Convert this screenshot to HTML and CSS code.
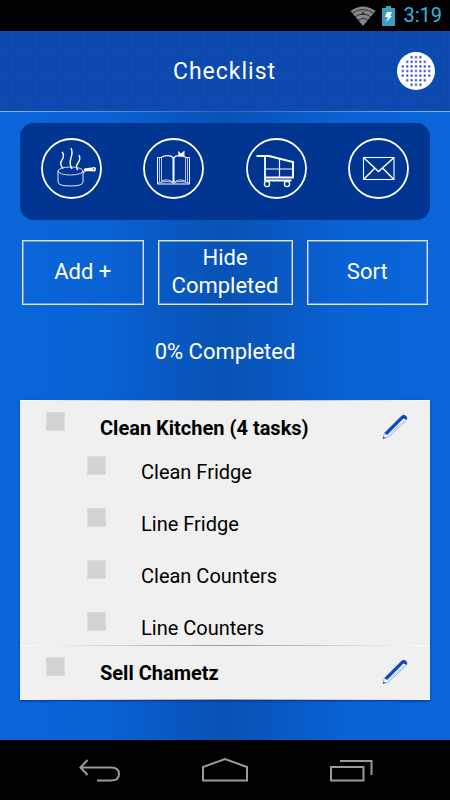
FILE: index.html
```
<!DOCTYPE html>
<html lang="en">
<head>
    <meta charset="UTF-8">
    <meta name="viewport" content="width=device-width, initial-scale=1.0">
    <title>Checklist</title>

    <link rel="stylesheet" href="styles.css">
</head>
<body>

    <!-- Device status bar -->
    <div class="status-bar">
        <svg width="26" height="20" viewBox="0 0 26 20">
            <path d="M0.5 5 Q13 -4 25.5 5 L13 20 Z" fill="#858585"/>
            <g fill="none" stroke="#222" stroke-width="0.9">
                <path d="M2 7.5 Q13 -0.5 24 7.5"/>
                <path d="M5 11 Q13 5 21 11"/>
                <path d="M8 14.5 Q13 10.5 18 14.5"/>
            </g>
            <path d="M11 9 L13 5 L15 9 Z" fill="#333"/>
        </svg>
        <svg width="13" height="20" viewBox="0 0 13 20">
            <path d="M4 0 H9 V2 H13 V20 H0 V2 H4 Z" fill="#3a9fc6"/>
            <path d="M5 6 H10 L8 10 H10 L4 16 L6 11 H3 Z" fill="#fff"/>
        </svg>
        <span class="clock">3:19</span>
    </div>

    <header class="header">
        <h1>Checklist</h1>
        <button class="matzah-button" aria-label="Menu">
            <svg width="38" height="38" viewBox="0 0 38 38">
                <defs>
                    <pattern id="holes" x="16.8" y="16.7" width="4.4" height="4.6" patternUnits="userSpaceOnUse">
                        <rect x="1.2" y="1.3" width="2" height="2" fill="#0c2fa8"/>
                    </pattern>
                </defs>
                <circle cx="19" cy="19" r="19" fill="#fff"/>
                <path d="M12.4 3 H25.6 V7.5 H30 V12 H34.4 V26 H30 V30.5 H25.6 V35 H12.4 V30.5 H8 V26 H3.6 V12 H8 V7.5 H12.4 Z" fill="url(#holes)"/>
            </svg>
        </button>
    </header>

    <main class="content">
        <!-- Section shortcuts -->
        <nav class="sections">
            <a href="#cooking" aria-label="Cooking">
                <svg width="61" height="61" viewBox="0 0 61 61">
                    <circle cx="30.5" cy="30.5" r="29.5" stroke-width="1.8"/>
                    <ellipse cx="29.5" cy="33" rx="12.5" ry="4" stroke-width="0.8"/>
                    <path d="M17 33 V44 Q17 48 29.5 48 Q42 48 42 44 V33" stroke-width="0.9"/>
                    <path d="M42 34 L45 31.5 V33 L42 35" stroke-width="0.8"/>
                    <path d="M43 30.5 L54 29 Q56 31 54 33.5 L43 33 Z" fill="#fff" stroke="none"/>
                    <circle cx="52.5" cy="31" r="0.8" fill="#003591" stroke="none"/>
                    <path d="M21 14 Q24 17 21 22 Q18 26 22 30.5 M30 10 Q32 14 30 20 Q28 26 31 31 M38 17 Q40 21 37 25 Q34 29 37 32" stroke-width="1.4"/>
                </svg>
            </a>
            <a href="#haggadah" aria-label="Haggadah">
                <svg width="61" height="61" viewBox="0 0 61 61">
                    <circle cx="30.5" cy="30.5" r="29.5" stroke-width="1.8"/>
                    <path d="M19 19.5 H14.5 V46 H46.5 V19.5 H42" stroke-width="1"/>
                    <path d="M16.5 20 V44 M44.5 20 V44 M18.5 19 V43.5 M42.5 19 V43.5" stroke-width="0.7"/>
                    <path d="M18.5 19 Q27 16 30.5 20 Q34 16 42.5 19" stroke-width="1.2"/>
                    <path d="M30.5 20 V44" stroke-width="2"/>
                    <path d="M18.5 43 Q26 40 30.5 45 Q35 40 42.5 43" stroke-width="0.8"/>
                    <path d="M15 45 Q26 42 30.5 45 Q35 42 46 45" stroke-width="0.8"/>
                    <path d="M35 13 L38 15.5 L41.5 12.5 V18.5 H35.5 Z" fill="#fff" stroke="none"/>
                </svg>
            </a>
            <a href="#shopping" aria-label="Shopping">
                <svg width="61" height="61" viewBox="0 0 61 61">
                    <circle cx="30.5" cy="30.5" r="29.5" stroke-width="1.8"/>
                    <path d="M10.5 18 H23 L47 24 V39.5 H20" stroke-width="2"/>
                    <path d="M19 18 V42.5 H45.5" stroke-width="1.8"/>
                    <path d="M33.5 21 V39 M20 31 H46" stroke-width="1.2"/>
                    <circle cx="21" cy="46" r="2.6" stroke-width="1.3"/>
                    <circle cx="41" cy="46" r="2.6" stroke-width="1.3"/>
                </svg>
            </a>
            <a href="#contact" aria-label="Contact">
                <svg width="61" height="61" viewBox="0 0 61 61">
                    <circle cx="30.5" cy="30.5" r="29.5" stroke-width="1.8"/>
                    <rect x="15.5" y="19.5" width="30.5" height="22" stroke-width="1.1"/>
                    <path d="M16 20 L30.5 33.5 L45.5 20 M16 41 L26.5 30.5 M45.5 41 L35 30.5" stroke-width="1.5"/>
                </svg>
            </a>
        </nav>

        <div class="actions">
            <button>Add +</button>
            <button class="wide">Hide Completed</button>
            <button>Sort</button>
        </div>

        <p class="progress">0% Completed</p>

        <ul class="tasks">
            <li class="task">
                <input type="checkbox" id="kitchen">
                <label for="kitchen">Clean Kitchen (4 tasks)</label>
                <button class="edit" aria-label="Edit Clean Kitchen">
                    <svg width="26" height="26" viewBox="0 0 26 26">
                        <path d="M1 24.5 L2.5 19 L19.5 2 Q22 0 24 2 Q26 4 24 6.5 L6.5 23 Z" fill="#fff" stroke="#7c9ad8" stroke-width="0.8"/>
                        <path d="M2.5 19 L19.5 2 Q22 0 24 2 Q26 4 24.5 6 L21.5 4.5 L5 21 Z" fill="#0b49bd"/>
                        <path d="M6 21.5 L22 6.5" stroke="#8ba8e0" stroke-width="0.8"/>
                        <path d="M0.8 24.8 L1.5 22.5 L3.5 24 Z" fill="#0b49bd"/>
                    </svg>
                </button>
            </li>
            <li>
                <ul class="subtasks">
                    <li>
                        <input type="checkbox" id="fridge">
                        <label for="fridge">Clean Fridge</label>
                    </li>
                    <li>
                        <input type="checkbox" id="line-fridge">
                        <label for="line-fridge">Line Fridge</label>
                    </li>
                    <li>
                        <input type="checkbox" id="counters">
                        <label for="counters">Clean Counters</label>
                    </li>
                    <li>
                        <input type="checkbox" id="line-counters">
                        <label for="line-counters">Line Counters</label>
                    </li>
                </ul>
            </li>
            <li class="task">
                <input type="checkbox" id="chametz">
                <label for="chametz">Sell Chametz</label>
                <button class="edit" aria-label="Edit Sell Chametz">
                    <svg width="26" height="26" viewBox="0 0 26 26">
                        <path d="M1 24.5 L2.5 19 L19.5 2 Q22 0 24 2 Q26 4 24 6.5 L6.5 23 Z" fill="#fff" stroke="#7c9ad8" stroke-width="0.8"/>
                        <path d="M2.5 19 L19.5 2 Q22 0 24 2 Q26 4 24.5 6 L21.5 4.5 L5 21 Z" fill="#0b49bd"/>
                        <path d="M6 21.5 L22 6.5" stroke="#8ba8e0" stroke-width="0.8"/>
                        <path d="M0.8 24.8 L1.5 22.5 L3.5 24 Z" fill="#0b49bd"/>
                    </svg>
                </button>
            </li>
        </ul>
    </main>

    <!-- Device navigation keys -->
    <footer class="nav-bar">
        <button aria-label="Back">
            <svg width="44" height="26" viewBox="0 0 44 26">
                <path d="M3 10.5 H34 Q42 10.5 42 17 Q42 23.5 34 23.5 H20 M10.5 3 L3.5 10.5 L10.500 18"/>
            </svg>
        </button>
        <button aria-label="Home">
            <svg width="48" height="26" viewBox="0 0 48 26">
                <path d="M2 23.5 V10 L24 2 L46 10 V23.5 Z"/>
            </svg>
        </button>
        <button aria-label="Recent apps">
            <svg width="44" height="26" viewBox="0 0 44 26">
                <path d="M2 10 H34.5 V23.5 H2 Z M11 4 H42.5 V18"/>
            </svg>
        </button>
    </footer>

</body>
</html>
```
FILE: styles.css
```
* {
    box-sizing: border-box;
}

body {
    margin: 0;
    min-height: 100vh;
    display: flex;
    flex-direction: column;
    background: linear-gradient(90deg, #0a66da 0%, #0a63d5 22%, #0959c3 38%, #0852b5 50%, #0959c3 62%, #0a63d5 78%, #0a66da 100%);
    color: #fff;
    font-family: Roboto, sans-serif;
}

button {
    padding: 0;
    border: none;
    background: none;
    color: inherit;
    font-family: inherit;
    cursor: pointer;
}

svg {
    display: block;
}

ul {
    list-style: none;
    margin: 0;
    padding: 0;
}

/* Status bar */
.status-bar {
    height: 31px;
    padding: 0 8px;
    display: flex;
    justify-content: flex-end;
    align-items: center;
    gap: 6px;
    background: #000;
}

.clock {
    margin-left: 2px;
    color: #33b5e5;
    font-size: 20px;
    line-height: 31px;
}

/* Header with a fine dotted texture */
.header {
    height: 81px;
    padding: 0 15px 0 14px;
    display: grid;
    grid-template-columns: 38px 1fr 38px;
    align-items: center;
    background: radial-gradient(circle, #0b47ab 1px, transparent 2px) 0 0 / 6px 6px #0d4bb1;
    border-bottom: 1px solid;
    border-image: linear-gradient(90deg, #8ab4ee, #2467bd 50%, #8ab4ee) 1;
}

.header h1 {
    grid-column: 2;
    margin: 0;
    font-size: 23px;
    font-weight: 400;
    letter-spacing: 1px;
    text-align: center;
}

.content {
    flex: 1;
    padding: 11px 20px 40px;
}

/* Shortcut icons */
.sections {
    display: grid;
    grid-template-columns: repeat(4, 1fr);
    justify-items: center;
    padding: 15px 0 21px;
    border-radius: 14px;
    background: #003591;
}

.sections svg {
    fill: none;
    stroke: #fff;
}

.actions {
    display: flex;
    gap: 14px;
    margin: 20px 2px 0;
}

.actions button {
    flex: 1;
    height: 65px;
    padding-bottom: 2px;
    border: 1px solid #dfe3f5;
    outline: 1px solid rgba(200, 205, 235, 0.5);
    outline-offset: -2px;
    font-size: 22px;
    line-height: 28px;
}

.actions .wide {
    flex: 0 0 135px;
}

.progress {
    margin: 33px 0 34px;
    font-size: 22px;
    line-height: 28px;
    text-align: center;
}

/* Task list */
.tasks {
    background: #f0f0f0;
    color: #000;
    font-size: 20px;
    line-height: 32px;
    box-shadow: 0 1px 2px rgba(0, 30, 150, 0.7);
}

.task {
    display: flex;
    align-items: flex-start;
    height: 55px;
    padding: 11px 22px 0 26px;
    border-top: 1px solid;
    border-image: linear-gradient(90deg, #fff, #999 50%, #fff) 1;
    font-weight: 700;
}

.task:last-child {
    border-bottom: 1px solid;
}

.task label {
    flex: 1;
}

.edit {
    margin-top: 2px;
}

.subtasks {
    display: grid;
    gap: 18px;
    padding: 0 22px 0 67px;
}

.subtasks li {
    display: flex;
    align-items: flex-start;
    height: 34px;
    padding-top: 1px;
}

input[type="checkbox"] {
    appearance: none;
    width: 19px;
    height: 19px;
    margin: 0 35px 0 0;
    border: 1px solid #dcdcdc;
    background: #d3d3d3;
}

input[type="checkbox"]:checked {
    background: #0b49bd;
}

/* Navigation keys */
.nav-bar {
    height: 60px;
    padding: 0 77px;
    display: flex;
    justify-content: space-between;
    align-items: center;
    background: #000;
}

.nav-bar svg {
    fill: none;
    stroke: #9a9a9a;
    stroke-width: 2;
}
```
